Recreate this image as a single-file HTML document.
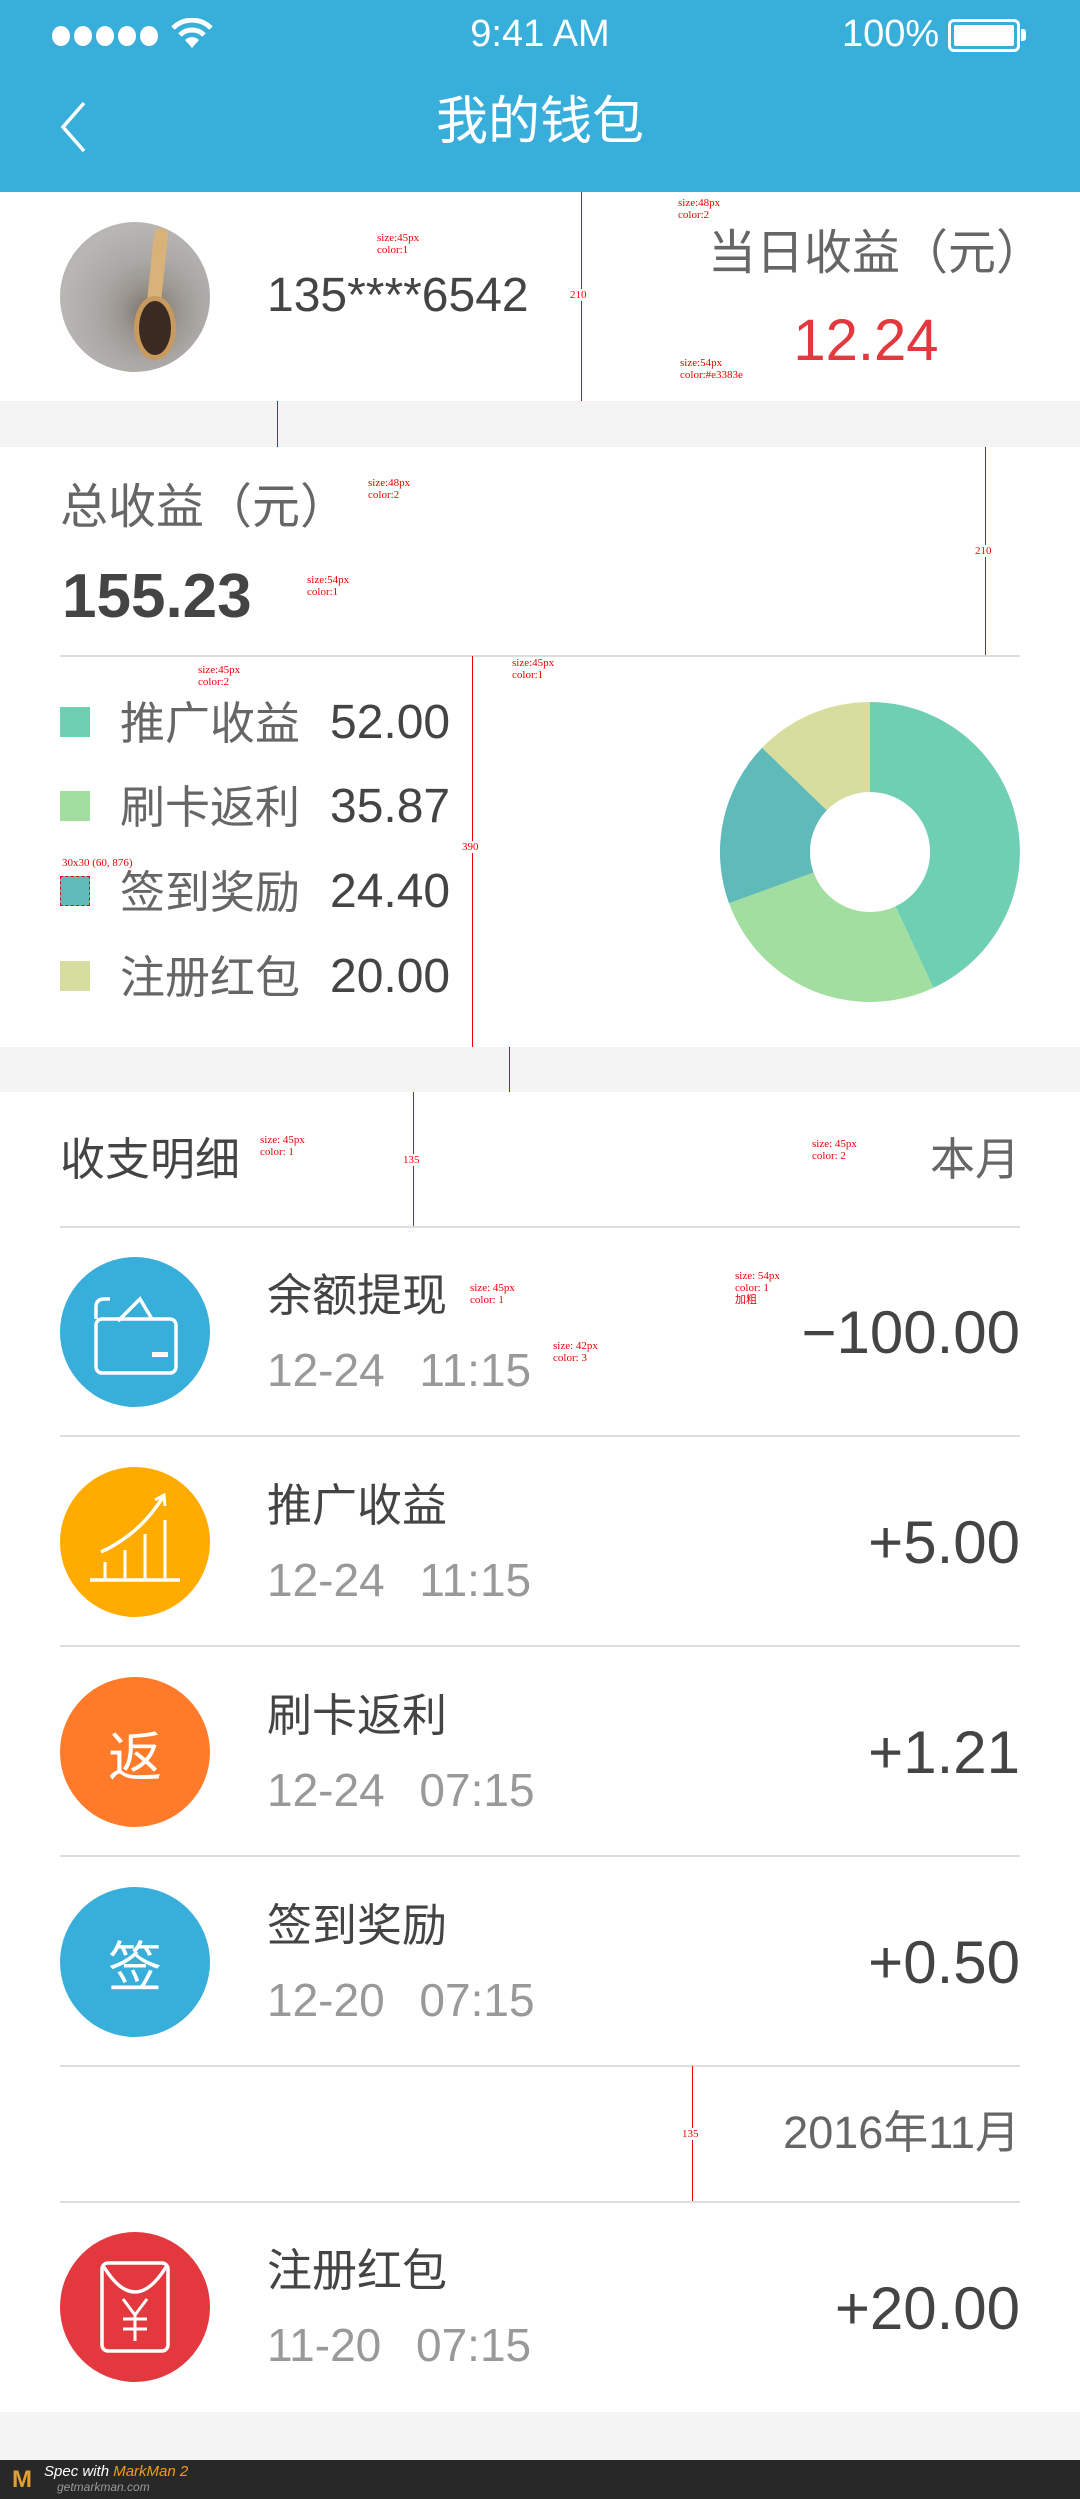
<!DOCTYPE html>
<html><head><meta charset="utf-8"><style>
*{margin:0;padding:0;box-sizing:border-box}
body{width:1080px;height:2499px;position:relative;background:#f4f4f4;font-family:"Liberation Sans","Noto Sans CJK SC",sans-serif;overflow:hidden}
.a{position:absolute;white-space:nowrap}
.w{position:absolute;left:0;width:1080px;background:#fff}
.sep{position:absolute;left:60px;width:960px;height:2px;background:#ddd}
.circ{position:absolute;left:60px;width:150px;height:150px;border-radius:50%;display:flex;align-items:center;justify-content:center}
.t{font-size:45px;line-height:45px;color:#444;left:267px}
.d{font-size:46px;line-height:46px;color:#999;left:267px;word-spacing:22px}
.m{font-size:60px;line-height:60px;color:#444;right:60px}
.sq{position:absolute;left:60px;width:30px;height:30px}
.lt{font-size:45px;line-height:45px;color:#666;left:120px}
.ln{font-size:48px;line-height:48px;color:#444;left:330px}
.r{position:absolute;background:#e00}
.rt{position:absolute;color:#e00;font-size:11px;font-family:"Liberation Serif",serif;line-height:12px}
</style></head><body>
<div class="a" style="left:0;top:0;width:1080px;height:192px;background:#38afdb"></div>
<div class="a" style="left:52px;top:26px;width:160px;height:20px">
<span style="position:absolute;left:0;top:0;width:18px;height:20px;border-radius:50%;background:#fff"></span>
<span style="position:absolute;left:22px;top:0;width:18px;height:20px;border-radius:50%;background:#fff"></span>
<span style="position:absolute;left:44px;top:0;width:18px;height:20px;border-radius:50%;background:#fff"></span>
<span style="position:absolute;left:66px;top:0;width:18px;height:20px;border-radius:50%;background:#fff"></span>
<span style="position:absolute;left:88px;top:0;width:18px;height:20px;border-radius:50%;background:#fff"></span>
</div>
<svg class="a" style="left:170px;top:18px" width="44" height="32" viewBox="0 0 44 32"><path d="M3 10 A27 27 0 0 1 41 10" stroke="#fff" stroke-width="5" fill="none"/><path d="M10 17 A17 17 0 0 1 34 17" stroke="#fff" stroke-width="5" fill="none"/><path d="M22 30 L15 22 A10 10 0 0 1 29 22 Z" fill="#fff"/></svg>
<div class="a" style="left:0;width:1080px;text-align:center;top:15px;font-size:38px;line-height:38px;color:#fff">9:41 AM</div>
<div class="a" style="left:842px;top:15px;font-size:38px;line-height:38px;color:#fff">100%</div>
<div class="a" style="left:948px;top:19px;width:72px;height:33px;border:3px solid #fff;border-radius:6px;padding:3px"><div style="width:100%;height:100%;background:#fff;border-radius:2px"></div></div>
<div class="a" style="left:1021px;top:29px;width:5px;height:12px;background:#fff;border-radius:0 3px 3px 0"></div>
<svg class="a" style="left:56px;top:98px" width="36" height="58"><polyline points="28,5 7,29 28,53" stroke="#fff" stroke-width="3.5" fill="none"/></svg>
<div class="a" style="left:0;width:1080px;text-align:center;top:94px;font-size:52px;line-height:56px;color:#fff">我的钱包</div>

<div class="w" style="top:192px;height:209px"></div>
<div class="a" style="left:60px;top:222px;width:150px;height:150px;border-radius:50%;background:radial-gradient(circle at 60% 60%,#7a7068 0,#9a9590 22%,#aaa7a4 40%,#b9b7b4 70%,#a7a4a1 100%)"></div>
<div class="a" style="left:150px;top:228px;width:14px;height:90px;background:#d9b27a;border-radius:6px;transform:rotate(6deg)"></div>
<div class="a" style="left:134px;top:296px;width:42px;height:64px;background:#c89a5e;border-radius:50%"></div>
<div class="a" style="left:139px;top:301px;width:32px;height:54px;background:#3a2a22;border-radius:50%"></div>
<div class="a" style="left:267px;top:272px;font-size:48px;line-height:48px;color:#444">135****6542</div>
<div class="a" style="left:708px;top:226px;font-size:48px;line-height:56px;color:#666">当日收益（元）</div>
<div class="a" style="left:766px;width:200px;text-align:center;top:312px;font-size:58px;line-height:58px;color:#e3383e">12.24</div>
<div class="r" style="left:581px;top:192px;width:1px;height:209px"></div>
<div class="rt" style="left:570px;top:289px;background:#fff">210</div>
<div class="rt" style="left:377px;top:232px">size:45px<br>color:1</div>
<div class="rt" style="left:678px;top:197px">size:48px<br>color:2</div>
<div class="rt" style="left:680px;top:357px">size:54px<br>color:#e3383e</div>

<div class="w" style="top:447px;height:600px"></div>
<div class="a" style="left:60px;top:480px;font-size:48px;line-height:56px;color:#666">总收益（元）</div>
<div class="a" style="left:62px;top:566px;font-size:62px;line-height:62px;color:#444;font-weight:bold">155.23</div>
<div class="sep" style="top:655px"></div>
<div class="sq" style="top:707px;background:#6fcfb3"></div>
<div class="sq" style="top:791px;background:#a2de9f"></div>
<div class="sq" style="top:876px;background:#5fbab9;border:1px dashed #e00"></div>
<div class="sq" style="top:961px;background:#d6dd9f"></div>
<div class="a lt" style="top:701px">推广收益</div>
<div class="a lt" style="top:785px">刷卡返利</div>
<div class="a lt" style="top:870px">签到奖励</div>
<div class="a lt" style="top:955px">注册红包</div>
<div class="a ln" style="top:699px">52.00</div>
<div class="a ln" style="top:783px">35.87</div>
<div class="a ln" style="top:868px">24.40</div>
<div class="a ln" style="top:953px">20.00</div>
<svg class="a" style="left:720px;top:702px" width="300" height="300" viewBox="-150 -150 300 300">
<path d="M0 -150 A150 150 0 0 1 63.4 135.9 L25.4 54.4 A60 60 0 0 0 0 -60Z" fill="#6fcfb3"/>
<path d="M63.4 135.9 A150 150 0 0 1 -141 51.3 L-56.4 20.5 A60 60 0 0 0 25.4 54.4Z" fill="#a2de9f"/>
<path d="M-141 51.3 A150 150 0 0 1 -107.9 -104.2 L-43.2 -41.7 A60 60 0 0 0 -56.4 20.5Z" fill="#5fbab9"/>
<path d="M-107.9 -104.2 A150 150 0 0 1 0 -150 L0 -60 A60 60 0 0 0 -43.2 -41.7Z" fill="#d6dd9f"/>
</svg>
<div class="r" style="left:472px;top:656px;width:1px;height:391px"></div>
<div class="rt" style="left:462px;top:841px;background:#fff">390</div>
<div class="r" style="left:985px;top:447px;width:1px;height:208px"></div>
<div class="rt" style="left:975px;top:545px;background:#fff">210</div>
<div class="rt" style="left:198px;top:664px">size:45px<br>color:2</div>
<div class="rt" style="left:512px;top:657px">size:45px<br>color:1</div>
<div class="rt" style="left:368px;top:477px">size:48px<br>color:2</div>
<div class="rt" style="left:307px;top:574px">size:54px<br>color:1</div>
<div class="rt" style="left:62px;top:857px">30x30 (60, 876)</div>
<div class="r" style="left:277px;top:401px;width:1px;height:46px"></div>
<div class="r" style="left:509px;top:1047px;width:1px;height:45px"></div>

<div class="w" style="top:1092px;height:1320px"></div>
<div class="a" style="left:60px;top:1137px;font-size:45px;line-height:46px;color:#444">收支明细</div>
<div class="a" style="right:60px;top:1137px;font-size:45px;line-height:46px;color:#666">本月</div>
<div class="r" style="left:413px;top:1092px;width:1px;height:135px"></div>
<div class="rt" style="left:403px;top:1154px;background:#fff">135</div>
<div class="rt" style="left:260px;top:1134px">size: 45px<br>color: 1</div>
<div class="rt" style="left:812px;top:1138px">size: 45px<br>color: 2</div>
<div class="sep" style="top:1226px"></div>

<div class="circ" style="top:1257px;background:#38afdb"><svg width="90" height="90" viewBox="0 0 90 90"><path d="M6 20 Q6 12 14 12 L20 12" stroke="#fff" stroke-width="3.5" fill="none"/><path d="M28 20 L50 -2 L62 18" stroke="#fff" stroke-width="3.5" fill="none" transform="translate(0,14)"/><rect x="6" y="32" width="80" height="54" rx="6" stroke="#fff" stroke-width="3.5" fill="none"/><path d="M6 32 L6 20" stroke="#fff" stroke-width="3.5"/><rect x="62" y="65" width="16" height="5" fill="#fff"/></svg></div>
<div class="a t" style="top:1273px">余额提现</div>
<div class="a d" style="top:1347px">12-24 11:15</div>
<div class="a m" style="top:1303px">−100.00</div>
<div class="rt" style="left:470px;top:1282px">size: 45px<br>color: 1</div>
<div class="rt" style="left:553px;top:1340px">size: 42px<br>color: 3</div>
<div class="rt" style="left:735px;top:1270px">size: 54px<br>color: 1<br>加粗</div>
<div class="sep" style="top:1435px"></div>

<div class="circ" style="top:1467px;background:#ffab00"><svg width="100" height="100" viewBox="0 0 100 100"><path d="M5 88 H95" stroke="#fff" stroke-width="3.5"/><path d="M20 86 V70 M40 86 V58 M60 86 V42 M80 86 V28" stroke="#fff" stroke-width="3"/><path d="M16 60 Q55 42 78 5" stroke="#fff" stroke-width="3.5" fill="none"/><path d="M70 8 L79 3 L80 14" stroke="#fff" stroke-width="3" fill="none"/></svg></div>
<div class="a t" style="top:1483px">推广收益</div>
<div class="a d" style="top:1557px">12-24 11:15</div>
<div class="a m" style="top:1513px">+5.00</div>
<div class="sep" style="top:1645px"></div>

<div class="circ" style="top:1677px;background:#ff7a29;color:#fff;font-size:54px">返</div>
<div class="a t" style="top:1693px">刷卡返利</div>
<div class="a d" style="top:1767px">12-24 07:15</div>
<div class="a m" style="top:1723px">+1.21</div>
<div class="sep" style="top:1855px"></div>

<div class="circ" style="top:1887px;background:#38afdb;color:#fff;font-size:54px">签</div>
<div class="a t" style="top:1903px">签到奖励</div>
<div class="a d" style="top:1977px">12-20 07:15</div>
<div class="a m" style="top:1933px">+0.50</div>
<div class="sep" style="top:2065px"></div>

<div class="a" style="right:60px;top:2110px;font-size:45px;line-height:46px;color:#666">2016年11月</div>
<div class="r" style="left:692px;top:2066px;width:1px;height:135px"></div>
<div class="rt" style="left:682px;top:2128px;background:#fff">135</div>
<div class="sep" style="top:2201px"></div>

<div class="circ" style="top:2232px;background:#e3383e"><svg width="80" height="100" viewBox="0 0 80 100"><rect x="7" y="6" width="66" height="88" rx="6" stroke="#fff" stroke-width="3.5" fill="none"/><path d="M9 10 Q40 60 71 10" stroke="#fff" stroke-width="3.5" fill="none"/><path d="M28 42 L40 58 L52 42 M40 58 V84 M28 62 H52 M28 72 H52" stroke="#fff" stroke-width="3" fill="none"/></svg></div>
<div class="a t" style="top:2248px">注册红包</div>
<div class="a d" style="top:2322px">11-20 07:15</div>
<div class="a m" style="top:2279px">+20.00</div>

<div class="a" style="left:0;top:2460px;width:1080px;height:39px;background:#282828"></div>
<div class="a" style="left:12px;top:2468px;font-size:24px;line-height:24px;font-weight:bold;color:#e0a030">M</div>
<div class="a" style="left:44px;top:2464px;font-size:15px;line-height:15px;color:#fff;font-style:italic">Spec with <span style="color:#f39c12">MarkMan 2</span></div>
<div class="a" style="left:57px;top:2481px;font-size:12px;line-height:12px;color:#999;font-style:italic">getmarkman.com</div>
</body></html>
